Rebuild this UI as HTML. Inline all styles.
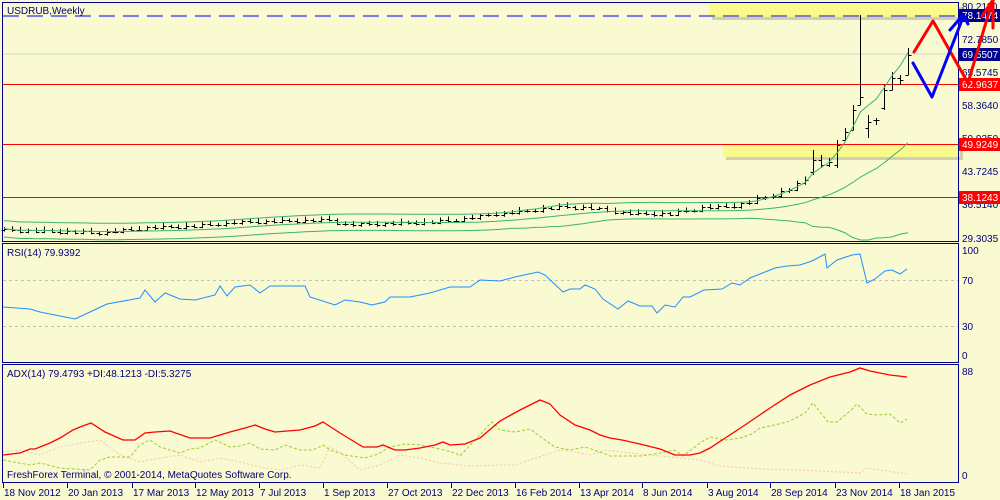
<!DOCTYPE html>
<html><head><meta charset="utf-8"><style>
html,body{margin:0;padding:0;background:#f9f9d2;width:1000px;height:500px;overflow:hidden}
svg{display:block}
text{font-family:"Liberation Sans",sans-serif;font-size:10px;fill:#00007a}
</style></head><body>
<svg id="s" width="1000" height="500" xmlns="http://www.w3.org/2000/svg">
<rect width="1000" height="500" fill="#f9f9d2"/>
<rect x="712" y="7" width="250" height="13" fill="#a8a890" opacity="0.5"/>
<rect x="709" y="4" width="250" height="13" fill="#fafa8c"/>
<rect x="726" y="147" width="237" height="13" fill="#a8a890" opacity="0.5"/>
<rect x="723" y="144" width="237" height="13" fill="#fafa8c"/>
<line x1="3" y1="54" x2="958" y2="54" stroke="#d8d8c8"/>
<line x1="3" y1="16" x2="958" y2="16" stroke="#0000ff" stroke-dasharray="16,8"/>
<line x1="3" y1="84.5" x2="958" y2="84.5" stroke="#ff0000"/>
<line x1="3" y1="144.5" x2="958" y2="144.5" stroke="#ff0000"/>
<line x1="3" y1="197.5" x2="958" y2="197.5" stroke="#ff0000"/>
<line x1="3" y1="280.5" x2="958" y2="280.5" stroke="#c0c0c0" stroke-dasharray="3,3"/>
<line x1="3" y1="326.5" x2="958" y2="326.5" stroke="#c0c0c0" stroke-dasharray="3,3"/>
<g id="dyn"></g>
<rect x="2.5" y="2.5" width="956" height="239" fill="none" stroke="#00008b"/>
<rect x="2.5" y="243.5" width="956" height="119" fill="none" stroke="#00008b"/>
<rect x="2.5" y="364.5" width="956" height="118" fill="none" stroke="#00008b"/>
<text x="7" y="14">USDRUB,Weekly</text>
<text x="7" y="256">RSI(14) 79.9392</text>
<text x="7" y="377">ADX(14) 79.4793 +DI:48.1213 -DI:5.3275</text>
<text x="7" y="478">FreshForex Terminal, © 2001-2014, MetaQuotes Software Corp.</text>
<g>
<text x="962" y="10">80.2110</text>
<text x="962" y="43">72.7850</text>
<text x="962" y="76">65.5745</text>
<text x="962" y="109">58.3640</text>
<text x="962" y="142">50.9350</text>
<text x="962" y="175">43.7245</text>
<text x="962" y="208">36.5140</text>
<text x="962" y="242">29.3035</text>
<rect x="959" y="9" width="41" height="13" fill="#00008b"/><text x="962" y="19" style="fill:#fff">78.1474</text>
<rect x="959" y="48" width="41" height="13" fill="#00008b"/><text x="962" y="58" style="fill:#fff">69.5507</text>
<rect x="959" y="78" width="41" height="13" fill="#ff0000"/><text x="962" y="88" style="fill:#fff">62.9637</text>
<rect x="959" y="138" width="41" height="13" fill="#ff0000"/><text x="962" y="148" style="fill:#fff">49.9249</text>
<rect x="959" y="191" width="41" height="13" fill="#ff0000"/><text x="962" y="201" style="fill:#fff">38.1243</text>
<text x="962" y="254">100</text><text x="962" y="284">70</text><text x="962" y="330">30</text><text x="962" y="359">0</text>
<text x="962" y="375">88</text><text x="962" y="479">0</text>
</g>
<g id="dates"></g>
<g fill="none" stroke-width="3" stroke-linecap="round" stroke-linejoin="round">
<polyline points="914,52 933,21 968,83 992,2" stroke="#ff0000"/>
<polyline points="982,16 993,0 993,28" stroke="#ff0000"/>
<polyline points="913,63 932,97 962,20" stroke="#0000ff"/>
<polyline points="950,30 963,15 968,24" stroke="#0000ff"/>
</g>
</svg>
<script>
var g=document.getElementById('dyn'),h='';
function X(i){return 4+7.93*i;}
var ky=[[0,230],[8,232],[12,233],[18,228],[24,226],[30,222],[36,221],[41,220],[43,225],[48,224],[54,222],[58,219],[62,214],[66,211],[70,207],[74,208],[76,211],[80,214],[84,214],[88,208],[92,206],[94,202],[97,195],[99,189],[101,180]];
function interp(i){for(var k=0;k<ky.length-1;k++){if(i>=ky[k][0]&&i<=ky[k+1][0]){var t=(i-ky[k][0])/(ky[k+1][0]-ky[k][0]);return ky[k][1]+t*(ky[k+1][1]-ky[k][1]);}}return 180;}
var bars=[];var prev=230;
for(var i=0;i<=101;i++){var c=interp(i)+((i*7)%5-2)*0.6;var o=prev;var hi=Math.min(o,c)-1.5-(i%3);var lo=Math.max(o,c)+1.5;bars.push([o,hi,lo,c]);prev=c;}
var late=[[172,150,175,160],[160,155,168,165],[165,158,167,162],[165,140,168,145],[140,128,140,132],[130,105,130,110],[105,15,105,97],[128,115,138,122],[120,118,125,120],[108,85,110,90],[90,72,90,78],[78,75,85,80],[75,48,75,55]];
late.forEach(function(b){bars.push(b);});
var Y2P=function(y){return 80.211-(y-6)/4.557},P2Y=function(p){return 6+(80.211-p)*4.557};
bars.forEach(function(b,i){var x=Math.round(X(i))+0.5;h+='<line x1="'+x+'" y1="'+b[1]+'" x2="'+x+'" y2="'+b[2]+'" stroke="#000"/>'+
'<line x1="'+(x-3)+'" y1="'+Math.round(b[0])+'.5" x2="'+x+'" y2="'+Math.round(b[0])+'.5" stroke="#000"/>'+
'<line x1="'+x+'" y1="'+Math.round(b[3])+'.5" x2="'+(x+3)+'" y2="'+Math.round(b[3])+'.5" stroke="#000"/>';});
var cl=bars.map(function(b){return Y2P(b[3]);});
var up=[],md=[],lw=[];
for(var i=0;i<cl.length;i++){var s=Math.max(0,i-19),a=cl.slice(s,i+1);var m=a.reduce(function(p,q){return p+q},0)/a.length;var v=Math.sqrt(a.reduce(function(p,q){return p+(q-m)*(q-m)},0)/a.length);v=Math.max(v,0.9);
up.push(X(i)+','+Math.max(4,P2Y(m+2*v)).toFixed(1));md.push(X(i)+','+P2Y(m).toFixed(1));lw.push(X(i)+','+Math.min(240,P2Y(m-2*v)).toFixed(1));}
[up,md,lw].forEach(function(l){h+='<polyline fill="none" stroke="#3cb371" points="'+l.join(' ')+'"/>';});
var rsi="3,307 30,309 40,312 70,318 75,319 90,312 107,304 140,298 145,290 155,302 165,293 180,299 195,300 215,295 220,286 227,296 235,287 250,285 260,293 270,286 305,286 310,297 335,305 345,300 360,302 372,305 385,302 390,297 410,297 430,293 450,287 470,287 480,280 500,281 515,277 538,272 545,275 563,292 570,289 580,289 585,285 595,289 603,299 618,309 628,301 640,306 652,306 657,313 665,305 675,307 683,297 690,297 704,290 722,289 732,283 740,285 750,278 765,272 775,268 787,266 800,265 812,261 825,254 827,268 837,260 852,255 860,254 867,283 875,279 885,271 892,270 900,274 907,269";
h+='<polyline fill="none" stroke="#1e90ff" points="'+rsi+'"/>';
var mdi="3,452 20,450 40,455 60,447 80,443 100,440 120,455 140,462 160,458 180,455 200,462 220,458 240,462 260,467 280,470 300,465 320,468 330,447 340,452 360,470 380,465 400,455 420,458 440,463 470,466 500,465 515,465 530,460 545,455 560,450 575,452 590,455 605,450 620,452 640,454 660,456 680,458 700,460 720,466 760,469 800,470 840,472 860,473 867,468 880,470 907,474";
h+='<polyline fill="none" stroke="#f5c8a8" stroke-dasharray="2,2" points="'+mdi+'"/>';
var pdi="3,460 30,465 40,463 60,468 90,470 100,460 110,457 130,457 140,445 150,440 160,447 180,453 190,449 200,448 215,440 230,447 240,446 250,443 260,449 275,450 285,445 300,450 313,450 323,445 330,450 345,455 365,458 378,454 390,447 405,444 420,445 435,448 440,449 455,453 460,456 475,440 492,422 500,430 515,432 530,429 545,440 555,447 570,450 585,447 600,452 610,456 625,456 640,456 655,454 660,453 675,450 683,456 700,443 710,437 725,440 740,438 752,434 760,428 775,425 790,421 805,413 813,403 828,422 837,422 850,411 857,404 867,414 877,415 890,414 900,423 907,419";
h+='<polyline fill="none" stroke="#9acd32" stroke-dasharray="3,2" points="'+pdi+'"/>';
var adx="3,455 20,453 30,449 35,449 50,443 60,438 73,430 80,427 91,423 105,432 123,440 135,440 145,433 155,432 170,431 190,438 210,438 230,432 245,428 255,425 265,429 275,432 300,430 315,426 323,422 340,433 363,447 377,447 383,445 395,450 405,450 420,448 435,445 443,442 450,445 465,444 480,438 500,421 520,410 540,400 550,404 560,415 575,425 590,430 600,435 610,438 622,440 640,444 660,449 675,455 690,455 700,453 710,448 745,425 770,408 790,395 810,385 830,377 850,372 860,368 870,371 890,375 907,377";
h+='<polyline fill="none" stroke="#ff0000" stroke-width="1.3" points="'+adx+'"/>';
g.innerHTML=h;
var d=[[2,"18 Nov 2012"],[66,"20 Jan 2013"],[131,"17 Mar 2013"],[194,"12 May 2013"],[258,"7 Jul 2013"],[322,"1 Sep 2013"],[386,"27 Oct 2013"],[450,"22 Dec 2013"],[514,"16 Feb 2014"],[578,"13 Apr 2014"],[641,"8 Jun 2014"],[706,"3 Aug 2014"],[769,"28 Sep 2014"],[834,"23 Nov 2014"],[898,"18 Jan 2015"]];
var s='';d.forEach(function(e){s+='<line x1="'+(e[0]+1.5)+'" y1="483" x2="'+(e[0]+1.5)+'" y2="488" stroke="#00008b"/><text x="'+(e[0]+2)+'" y="496">'+e[1]+'</text>';});
document.getElementById('dates').innerHTML=s;
</script>
</body></html>
